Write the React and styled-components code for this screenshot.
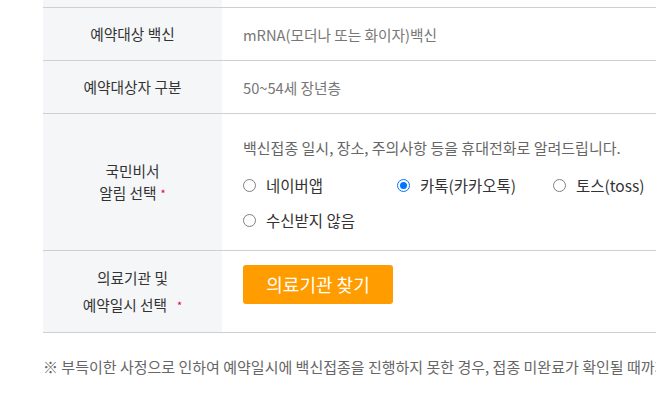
import React from 'react';
import styled, { createGlobalStyle } from 'styled-components';

const GlobalStyle = createGlobalStyle`
  body {
    margin: 0;
    background: #fff;
    font-family: 'Noto Sans CJK KR', 'Noto Sans', sans-serif;
    overflow: hidden;
  }
`;

const StyledPage = styled.div`
  width: 656px;
  height: 402px;
  overflow: hidden;
  padding-left: 43px;
  box-sizing: border-box;
`;

const StyledTable = styled.div`
  width: 700px;
  display: grid;
  grid-template-columns: 179px 1fr;
`;

const Label = styled.div`
  box-sizing: border-box;
  background: #f5f6f8;
  color: #333;
  font-size: 14.7px;
  line-height: ${({ $lh }) => $lh || '22px'};
  height: ${({ $h }) => $h}px;
  border-bottom: 1px solid #cfcfcf;
  display: flex;
  flex-direction: column;
  align-items: center;
  justify-content: center;
  text-align: center;
`;

const Value = styled.div`
  box-sizing: border-box;
  color: #777;
  font-size: 14.7px;
  height: ${({ $h }) => $h}px;
  border-bottom: 1px solid #cfcfcf;
  display: flex;
  flex-direction: column;
  justify-content: center;
  align-items: flex-start;
  padding-left: 21px;
`;

const Star = styled.span`
  color: #e4003b;
  font-size: 11px;
  margin-left: ${({ $gap }) => $gap || 4}px;
  vertical-align: 1px;
`;

const Desc = styled.p`
  margin: 4px 0 17px;
  color: #666;
  font-size: 15px;
  line-height: 20px;
`;

const Options = styled.div`
  display: grid;
  grid-template-columns: 154px 156px 120px;
  row-gap: 14px;
`;

const Option = styled.label`
  display: flex;
  align-items: center;
  gap: 10px;
  color: #333;
  font-size: 15.5px;
  line-height: 21px;
`;

const Circle = styled.span`
  width: 13px;
  height: 13px;
  flex-shrink: 0;
  box-sizing: border-box;
  border-radius: 50%;
  border: 1px solid ${({ $on }) => ($on ? '#0075ff' : '#808080')};
  display: flex;
  align-items: center;
  justify-content: center;

  &::after {
    content: '';
    display: ${({ $on }) => ($on ? 'block' : 'none')};
    width: 7px;
    height: 7px;
    border-radius: 50%;
    background: #0075ff;
  }
`;

const FindButton = styled.button`
  width: 150px;
  height: 39px;
  margin-bottom: 15px;
  border: none;
  border-radius: 3px;
  background: #ff9c00;
  color: #fff;
  font-family: inherit;
  font-size: 18px;
  cursor: pointer;
`;

const Note = styled.p`
  margin: 23px 0 0;
  color: #666;
  font-size: 15px;
  white-space: nowrap;
`;

const radios = [
  { label: '네이버앱' },
  { label: '카톡(카카오톡)', on: true },
  { label: '토스(toss)' },
  { label: '수신받지 않음' },
];

const App = () => (
  <>
    <GlobalStyle />
    <StyledPage>
      <StyledTable>
        <Label $h={8} />
        <Value $h={8} />

        <Label $h={53}>예약대상 백신</Label>
        <Value $h={53}>mRNA(모더나 또는 화이자)백신</Value>

        <Label $h={53}>예약대상자 구분</Label>
        <Value $h={53}>50~54세 장년층</Value>

        <Label $h={137}>
          <span>국민비서</span>
          <span>
            알림 선택<Star>*</Star>
          </span>
        </Label>
        <Value $h={137}>
          <Desc>백신접종 일시, 장소, 주의사항 등을 휴대전화로 알려드립니다.</Desc>
          <Options>
            {radios.map((r) => (
              <Option key={r.label}>
                <Circle $on={r.on} />
                {r.label}
              </Option>
            ))}
          </Options>
        </Value>

        <Label $h={82} $lh="27px">
          <span>의료기관 및</span>
          <span>
            예약일시 선택<Star $gap={10}>*</Star>
          </span>
        </Label>
        <Value $h={82}>
          <FindButton>의료기관 찾기</FindButton>
        </Value>
      </StyledTable>
      <Note>※ 부득이한 사정으로 인하여 예약일시에 백신접종을 진행하지 못한 경우, 접종 미완료가 확인될 때까지 예약이 제한됩니다.</Note>
    </StyledPage>
  </>
);

export default App;
